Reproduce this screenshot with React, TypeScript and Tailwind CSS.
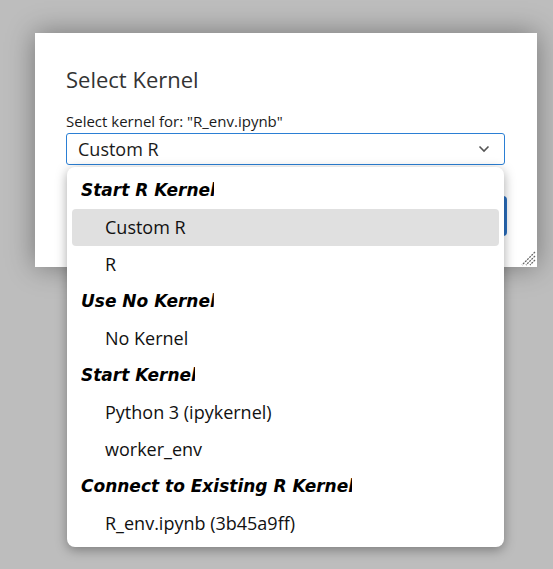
import React from "react";

type Row = { label: string; header?: boolean; active?: boolean };

const rows: Row[] = [
  { label: "Start R Kernel", header: true },
  { label: "Custom R", active: true },
  { label: "R" },
  { label: "Use No Kernel", header: true },
  { label: "No Kernel" },
  { label: "Start Kernel", header: true },
  { label: "Python 3 (ipykernel)" },
  { label: "worker_env" },
  { label: "Connect to Existing R Kernel", header: true },
  { label: "R_env.ipynb (3b45a9ff)" },
];

const ui = { fontFamily: '"Open Sans", "Noto Sans", sans-serif' };
const head = { fontFamily: '"DejaVu Sans", Verdana, sans-serif' };

function KernelList() {
  return (
    <div className="absolute left-[32px] top-[134px] w-[437px] rounded-lg bg-white py-[5px] shadow-[0_3px_12px_rgba(0,0,0,0.35)]">
      {rows.map((row) =>
        row.header ? (
          <div key={row.label} className="flex h-[37px] items-center px-[14px]">
            <span
              className="inline-block overflow-hidden text-[17px] font-bold italic text-black [clip-path:inset(0_2px_0_0)]"
              style={head}
            >
              {row.label}
            </span>
          </div>
        ) : (
          <div
            key={row.label}
            className={`mx-[5px] flex h-[37px] items-center rounded-[4px] pl-[33px] text-[18px] text-[#111] ${
              row.active ? "bg-[#e0e0e0]" : ""
            }`}
            style={ui}
          >
            {row.label}
          </div>
        )
      )}
    </div>
  );
}

export default function App() {
  return (
    <div className="min-h-[569px] w-full overflow-hidden bg-[#bdbdbd] pt-[33px] pl-[35px]" style={ui}>
      <div className="relative h-[234px] w-[502px] bg-white shadow-[0_0_26px_rgba(0,0,0,0.38)]">
        <div className="px-[31px] pt-[32px]">
          <h1 className="text-[22px] leading-[28px] text-[#333]">Select Kernel</h1>
          <p className="mt-[19px] text-[15px] leading-[18px] text-[#1a1a1a]">
            Select kernel for: "R_env.ipynb"
          </p>
          <div className="mt-[3px] flex h-[32px] w-[439px] items-center justify-between rounded-[3px] border border-[#2b7fd4] px-[11px]">
            <span className="text-[18px] text-[#1a1a1a]">Custom R</span>
            <svg width="12" height="8" viewBox="0 0 12 8" className="mr-[3px]">
              <path d="M1.5 1.5 6 6l4.5-4.5" fill="none" stroke="#555" strokeWidth="1.6" />
            </svg>
          </div>
          <div className="mt-[31px] flex justify-end">
            <button className="mr-[-1px] h-[40px] w-[90px] rounded-[4px] bg-[#2a6fbf] text-[14px] text-white">
              Select
            </button>
          </div>
        </div>
        <svg width="18" height="18" viewBox="0 0 18 18" className="absolute bottom-[1px] right-[1px]">
          <path d="M17 4 4 17M17 8 8 17M17 12 12 17" stroke="#666" strokeWidth="1.3" strokeDasharray="2 1" />
        </svg>
        <KernelList />
      </div>
    </div>
  );
}
